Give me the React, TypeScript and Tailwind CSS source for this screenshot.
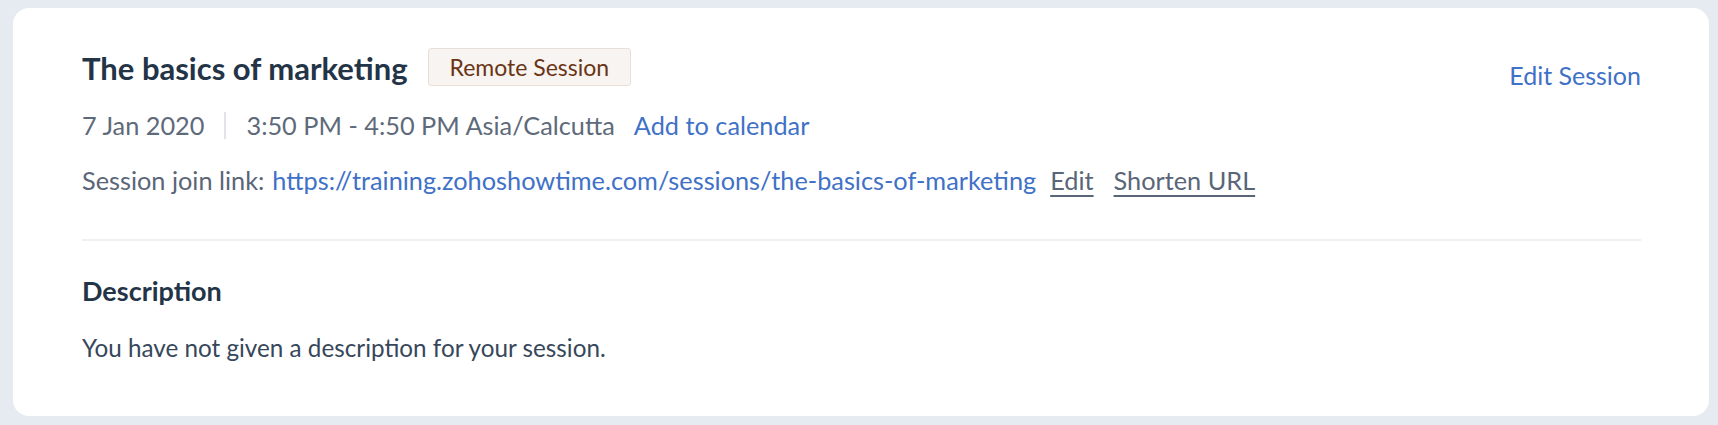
import React from "react";

export default function App() {
  return (
    <div
      className="w-full h-[425px] bg-[#e6eaf1] pl-[13px] pr-[9px] pt-[8px] pb-[9px]"
      style={{ fontFamily: "Lato, 'Open Sans', sans-serif" }}
    >
      <div className="bg-white rounded-[16px] h-full pl-[69px] pr-[68px] pt-[40px]">
        <div className="flex justify-between items-start">
          <div className="flex items-center h-[38px]">
            <h1 className="mt-[2px] text-[31px] font-bold text-[#243447] leading-none">
              The basics of marketing
            </h1>
            <span className="ml-[20px] h-[38px] px-[21px] flex items-center rounded-[3px] border border-[#e9dfd9] bg-[#f8f4f2] text-[#6a3414] text-[23px] leading-none">
              Remote Session
            </span>
          </div>
          <a className="mt-[12px] text-[25px] leading-[30px] text-[#3f71c7]">Edit Session</a>
        </div>
        <div className="flex items-center mt-[20px] h-[30px] text-[25.3px] leading-[30px] text-[#5e6a7a]">
          <span>7 Jan 2020</span>
          <span className="mx-[20px] w-[2px] h-[27px] bg-[#e1e4e8]" />
          <span>3:50 PM - 4:50 PM Asia/Calcutta</span>
          <a className="ml-[19px] text-[#3f71c7]">Add to calendar</a>
        </div>
        <div className="flex items-center mt-[25px] h-[30px] text-[25.3px] leading-[30px] text-[#5a6678]">
          <span>Session join link:</span>
          <a className="ml-[8px] text-[#3f71c7]">
            https://training.zohoshowtime.com/sessions/the-basics-of-marketing
          </a>
          <a className="ml-[14px] underline decoration-[1.5px] underline-offset-[5px] text-[#5a6678]">Edit</a>
          <a className="ml-[20px] underline decoration-[1.5px] underline-offset-[5px] text-[#5a6678]">Shorten URL</a>
        </div>
        <div className="mt-[44px] h-[2px] bg-[#eef0f2]" />
        <h2 className="mt-[34px] text-[27px] font-bold leading-[32px] text-[#243447]">Description</h2>
        <p className="mt-[26px] text-[24.25px] leading-[30px] text-[#37475b]">
          You have not given a description for your session.
        </p>
      </div>
    </div>
  );
}
